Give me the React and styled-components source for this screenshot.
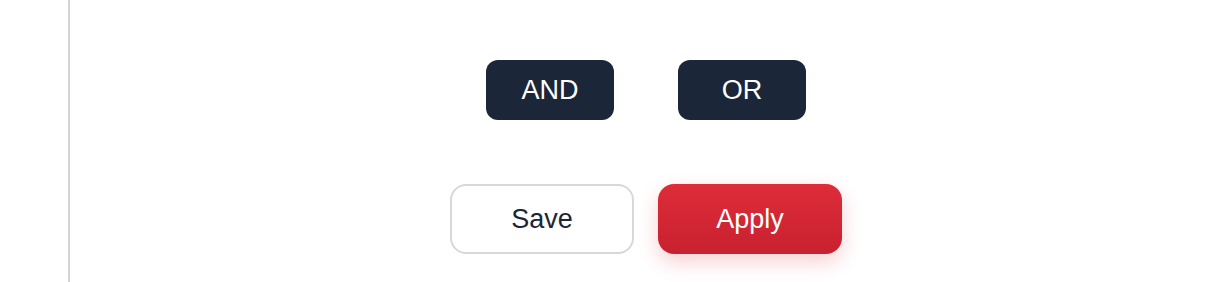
import React from 'react';
import styled, { createGlobalStyle } from 'styled-components';

const GlobalStyle = createGlobalStyle`
  body {
    margin: 0;
    font-family: "Liberation Sans", Arial, sans-serif;
    background: #fff;
  }
`;

const Page = styled.div`
  display: flex;
  height: 282px;
`;

const Rail = styled.div`
  width: 68px;
  border-right: 2px solid #d4d4d4;
`;

const Main = styled.div`
  flex: 1;
  display: flex;
  flex-direction: column;
  align-items: center;
  padding: 60px 0 0 2px;
  gap: 64px;
`;

const Row = styled.div`
  display: flex;
  gap: ${p => p.$gap}px;
`;

const LogicButton = styled.button`
  width: 128px;
  height: 60px;
  border: none;
  border-radius: 12px;
  background: #1b2638;
  color: #fff;
  font-family: inherit;
  font-size: 27px;
  cursor: pointer;
`;

const ActionButton = styled.button`
  width: 184px;
  height: 70px;
  border-radius: 16px;
  font-family: inherit;
  font-size: 27px;
  cursor: pointer;
  ${p =>
    p.$primary
      ? `
    border: none;
    color: #fff;
    background: linear-gradient(180deg, #de2c39 0%, #c8212f 100%);
    box-shadow: 0 8px 20px rgba(220, 40, 55, 0.22);
  `
      : `
    border: 2px solid #d8d8d8;
    color: #1b2638;
    background: #fff;
  `}
`;

export default function App() {
  return (
    <>
      <GlobalStyle />
      <Page>
        <Rail />
        <Main>
          <Row $gap={64}>
            <LogicButton>AND</LogicButton>
            <LogicButton>OR</LogicButton>
          </Row>
          <Row $gap={24}>
            <ActionButton>Save</ActionButton>
            <ActionButton $primary>Apply</ActionButton>
          </Row>
        </Main>
      </Page>
    </>
  );
}
